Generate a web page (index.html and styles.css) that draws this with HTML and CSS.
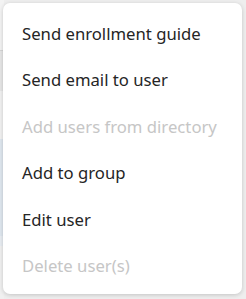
FILE: index.html
```html
<!DOCTYPE html>
<html>
<head>
<meta charset="utf-8">
<link rel="stylesheet" href="styles.css">
</head>
<body>
<div class="stage">
  <div class="backdrop">
    <div class="seg s1"></div>
    <div class="seg s2"></div>
    <div class="seg s3"></div>
    <div class="seg s4"></div>
    <div class="seg s5"></div>
    <div class="seg s6"></div>
  </div>
  <ul class="menu">
    <li class="item">Send enrollment guide</li>
    <li class="item">Send email to user</li>
    <li class="item disabled">Add users from directory</li>
    <li class="item">Add to group</li>
    <li class="item">Edit user</li>
    <li class="item disabled">Delete user(s)</li>
  </ul>
</div>
</body>
</html>
```
FILE: styles.css
```css
html, body {
  margin: 0;
  padding: 0;
}
body {
  width: 246px;
  height: 299px;
  overflow: hidden;
  background: #eeeeee;
  font-family: "Noto Sans", Roboto, sans-serif;
}
.stage {
  position: relative;
  width: 246px;
  height: 299px;
}
.backdrop {
  position: absolute;
  left: 0;
  top: 0;
  width: 4px;
  height: 299px;
  display: flex;
  flex-direction: column;
}
.seg { width: 100%; }
.s1 { height: 50px; background: #f3f3f3; border-bottom: 1px solid #d6d6d6; }
.s2 { height: 40px; background: #e6e6e6; }
.s3 { height: 48px; background: #f1f1f1; }
.s4 { height: 97px; background: #dfe7ef; }
.s5 { height: 10px; background: #e8edf2; }
.s6 { flex: 1; background: #f0f0f0; }
.menu {
  position: absolute;
  left: 3px;
  top: 3px;
  width: 239px;
  height: 291px;
  box-sizing: border-box;
  margin: 0;
  padding: 7px 0 5px;
  list-style: none;
  background: #ffffff;
  border-radius: 7px;
  box-shadow: 0 1px 4px rgba(0,0,0,0.18);
  display: flex;
  flex-direction: column;
}
.item {
  height: 46.5px;
  display: flex;
  align-items: center;
  padding-left: 19px;
  font-size: 16.7px;
  color: #252525;
  white-space: nowrap;
}
.item.disabled {
  color: #c6c6c6;
}
```
